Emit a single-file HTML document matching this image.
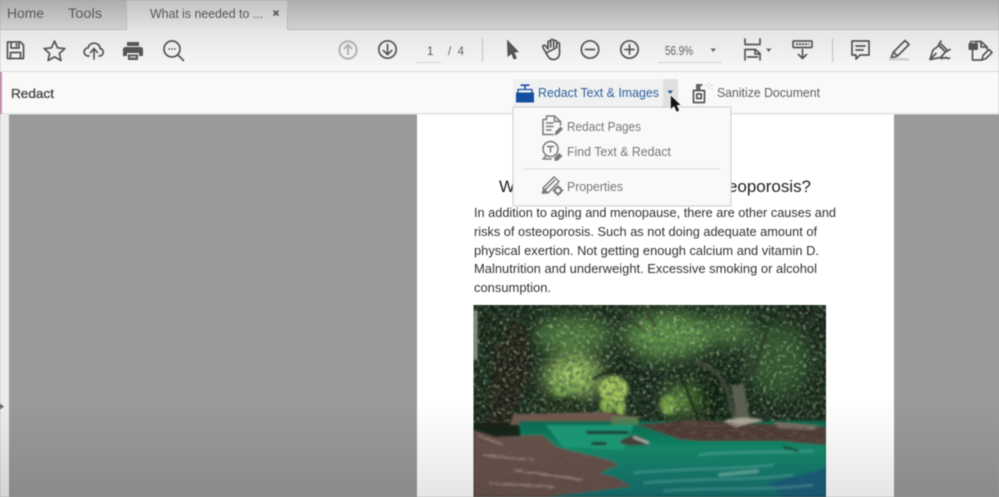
<!DOCTYPE html>
<html lang="en"><head><meta charset="utf-8"><title>Redact</title>
<style>
html,body{margin:0;padding:0;background:#9a9a9a;width:999px;height:497px;overflow:hidden}
svg{display:block;position:absolute;left:0;top:0;filter:blur(.45px)}
text{font-family:"Liberation Sans",Arial,sans-serif}
.i{fill:none;stroke:#555;stroke-width:1.7;stroke-linejoin:round;stroke-linecap:round}
.g{fill:none;stroke:#7a7a7a;stroke-width:1.5;stroke-linejoin:round;stroke-linecap:round}
</style></head><body>
<svg width="999" height="497" viewBox="0 0 999 497" xmlns="http://www.w3.org/2000/svg">
<defs>
<linearGradient id="top" x1="0" y1="0" x2="0" y2="1"><stop offset="0" stop-color="#adadad"/><stop offset="1" stop-color="#d2d2d2"/></linearGradient>
<linearGradient id="tab" x1="0" y1="0" x2="0" y2="1"><stop offset="0" stop-color="#c2c2c2"/><stop offset="1" stop-color="#e4e4e4"/></linearGradient>
<linearGradient id="tb" x1="0" y1="0" x2="0" y2="1"><stop offset="0" stop-color="#e5e5e5"/><stop offset="1" stop-color="#f8f8f8"/></linearGradient>
<linearGradient id="fade" x1="0" y1="0" x2="0" y2="1"><stop offset="0" stop-color="#000" stop-opacity="0"/><stop offset="1" stop-color="#000" stop-opacity=".1"/></linearGradient>
<linearGradient id="water" x1="0" y1="0" x2="0" y2="1"><stop offset="0" stop-color="#0f6a50"/><stop offset=".35" stop-color="#128a6c"/><stop offset="1" stop-color="#14706f"/></linearGradient>
<filter id="b1" x="-20%" y="-20%" width="140%" height="140%"><feGaussianBlur stdDeviation="1.100"/></filter>
<filter id="b2" x="-30%" y="-30%" width="160%" height="160%"><feGaussianBlur stdDeviation="1.800"/></filter>
<filter id="b3" x="-40%" y="-40%" width="180%" height="180%"><feGaussianBlur stdDeviation="3"/></filter>
<filter id="b8" x="-60%" y="-60%" width="220%" height="220%"><feGaussianBlur stdDeviation="8"/></filter>
<filter id="leaf" x="0" y="0" width="100%" height="100%"><feTurbulence type="fractalNoise" baseFrequency=".24" numOctaves="2" seed="8"/><feColorMatrix type="matrix" values="0 0 0 0 .04  0 0 0 0 .09  0 0 0 0 .05  2.600 2.600 0 0 -2.300"/><feGaussianBlur stdDeviation=".6"/></filter>
<filter id="leaf2" x="0" y="0" width="100%" height="100%"><feTurbulence type="fractalNoise" baseFrequency=".3" numOctaves="2" seed="21"/><feColorMatrix type="matrix" values="0 0 0 0 .62  0 0 0 0 .78  0 0 0 0 .42  3.500 3.500 0 0 -3.700"/><feGaussianBlur stdDeviation=".5"/></filter>
<filter id="bark" x="0" y="0" width="100%" height="100%"><feTurbulence type="fractalNoise" baseFrequency=".12 .4" numOctaves="2" seed="5"/><feColorMatrix type="matrix" values="0 0 0 0 .12  0 0 0 0 .08  0 0 0 0 .07  3 3 0 0 -2.800"/><feGaussianBlur stdDeviation=".5"/></filter>
<clipPath id="pic"><rect width="352.500" height="192"/></clipPath>
<clipPath id="bankclip"><path d="M0 125L22 132 68 130 85 143 135 155 145 160 125 168 140 172 158 181 120 186 70 192H0Z"/><path d="M165 120L215 115 270 118 352 122V140L310 136 262 136 225 136 205 134 180 125Z"/></clipPath>
</defs>

<rect x="0" y="0" width="999" height="497" fill="#9a9a9a"/>
<rect x="0" y="114" width="9" height="383" fill="#ececec"/>
<rect x="417" y="114" width="477" height="383" fill="#fff"/>

<!-- tab bar -->
<rect width="999" height="30" fill="url(#top)"/>
<rect x="127" y="0" width="160" height="30" fill="url(#tab)"/>
<path d="M126.500 0V29.500M287.500 0V29.500" stroke="#b6b6b6"/>
<path d="M0 29.500H127M287 29.500H999" stroke="#bcbcbc"/>
<text x="7" y="18" font-size="14" fill="#5a5a5a" textLength="37" lengthAdjust="spacingAndGlyphs">Home</text>
<text x="68" y="18" font-size="14" fill="#5a5a5a" textLength="34" lengthAdjust="spacingAndGlyphs">Tools</text>
<text x="150" y="18" font-size="13" fill="#555" textLength="113" lengthAdjust="spacingAndGlyphs">What is needed to ...</text>
<path d="M273.500 10.500l5 5m0-5l-5 5" stroke="#555" stroke-width="1.600" fill="none"/>

<!-- toolbar -->
<rect y="30" width="999" height="41" fill="url(#tb)"/>
<rect y="71" width="999" height="1" fill="#dcdcdc"/>
<path class="i" d="M7.500 42H20.500L23.500 45V58.500H7.500Z"/><path class="i" d="M11 42V48H19V42M16.500 44V46M10.500 58.500V52.500H20.500V58.500" stroke-width="1.300"/>
<path class="i" d="M54.500 41L57.500 47.800 64.800 48.600 59.400 53.500 60.900 60.500 54.500 56.900 48.100 60.500 49.600 53.500 44.200 48.600 51.500 47.800Z"/>
<path class="i" d="M89 56H87.500C81.500 54 84.500 47.500 88 48 89.500 41 100 42 100 48.500 104.500 49.500 104 55 100 56H99"/><path class="i" d="M94 59V49M90.500 52.500L94 48.500 97.500 52.500"/>
<path d="M127 42H139V46H127ZM125.500 47H140.500A2.500 2.500 0 0 1 143 49.500V56H139V53H127V56H123V49.500A2.500 2.500 0 0 1 125.500 47ZM128 54.500H138V60H128Z" fill="#555"/><rect x="130" y="56" width="6" height="2" fill="#bbb"/>
<circle class="i" cx="172" cy="49" r="8"/><path class="i" d="M178 55L183.500 60.500" stroke-width="2"/><path d="M168.500 49h1.500m1.300 0h1.500m1.300 0h1.500" stroke="#555" stroke-width="1.400" fill="none"/>
<circle cx="348" cy="50" r="8.700" fill="none" stroke="#adadad" stroke-width="1.800"/><path d="M348 55V45M343.800 49L348 44.800 352.200 49" fill="none" stroke="#adadad" stroke-width="1.800"/>
<circle class="i" cx="387.500" cy="49.500" r="8.700"/><path class="i" d="M387.500 44.500V54.500M383.300 50.500L387.500 54.700 391.700 50.500"/>
<text x="427" y="55" font-size="11.500" fill="#555">1</text>
<text x="448" y="55" font-size="11.500" fill="#666" textLength="16">/ 4</text>
<path d="M416 62.500H441" stroke="#d5d5d5"/>
<path d="M482.500 38V62" stroke="#c8c8c8" stroke-width="1.300"/>
<path d="M507 39.500L519 52 514.500 52.500 517 58.500 513.500 59.500 511.500 54 507.500 57Z" fill="#555"/>
<path class="i" d="M546 53L543 47.500C542 45.500 544.500 44.500 545.800 46L548 49V42.500C548 40.500 550.500 40.500 550.700 42.500V47M550.700 47V41C550.700 39 553.700 39 553.700 41V47M553.700 47V41.700C553.700 40 556.500 40 556.700 41.700V47.500M556.700 47.500V44C556.700 42.300 559.500 42.300 559.500 44V53C559.500 57 557 59.500 553 59.500 549.500 59.500 548 56.500 546 53Z" stroke-width="1.500"/>
<circle class="i" cx="590" cy="49.500" r="8.700"/><path class="i" d="M585.500 49.500H594.500"/>
<circle class="i" cx="629.500" cy="49.500" r="8.700"/><path class="i" d="M625 49.500H634M629.500 45V54"/>
<text x="665" y="55" font-size="12.500" fill="#5e5e5e" textLength="28" lengthAdjust="spacingAndGlyphs">56.9%</text>
<path d="M710.500 48.500H716L713.200 52Z" fill="#666"/>
<path d="M658 62.500H722" stroke="#d5d5d5"/>
<path class="i" d="M745 39V44.500H760V39M745 60V49.500H755.500L760 53.500V60" stroke-width="1.500"/><path class="i" d="M755 49.500V54H760M747.500 57H757.500" stroke-width="1.200"/>
<path d="M766 48.500H771.500L768.700 52Z" fill="#666"/>
<rect class="i" x="793" y="41" width="19" height="6.500" rx="1"/><path d="M796 44.200h13" stroke="#555" stroke-width="1.800" stroke-dasharray="2 1" fill="none"/><path class="i" d="M802.500 49.500V58.500M798.500 54.500L802.500 58.500 806.500 54.500"/>
<path d="M832.500 38V62" stroke="#c8c8c8" stroke-width="1.300"/>
<path class="i" d="M852 41H869V55H860L856 59V55H852Z"/><path class="i" d="M856 46H865M856 50H863" stroke-width="1.200"/>
<path class="i" d="M893.500 52L905 40.500 909 44.500 897.500 56ZM893.500 52L891 58 897.500 56"/><rect x="889" y="58" width="20" height="2.500" fill="#cfcfcf"/>
<path class="i" d="M930 59.500L933 50 939 45.500 945.500 52 940.500 57.500ZM930 59.500L936 53.500" stroke-width="1.600"/><path class="i" d="M939 45.500L942 48.500M941 41L938.500 45M945.500 52L950 49.500M941 44L947 50" stroke-width="1.600"/><path class="i" d="M941.500 59C943.500 55.500 944.500 60 946 57.500 946.500 56.500 947.500 60 949.500 58" stroke-width="1.100"/>
<path class="i" d="M976 41.500H981L987 47V49M972.500 50.500V60H982" stroke-width="1.600"/><path class="i" d="M981 41.500V47H987" stroke-width="1.300"/><rect x="968.500" y="43" width="9.500" height="7" rx="1" fill="#555"/><path d="M970.500 43V41.500H976V43" stroke="#555" fill="none" stroke-width="1.300"/><path class="i" d="M982 60L983 55.500 989 49.500 992 52.500 986 58.500Z" stroke-width="1.400"/>

<!-- redact bar -->
<rect y="72" width="999" height="41" fill="#f9f9f9"/>
<rect y="113" width="999" height="1.500" fill="#e2e2e2"/>
<rect x="0" y="72" width="2" height="42" fill="#cc8fb5"/>
<text x="11" y="98" font-size="13" fill="#484848" stroke="#484848" stroke-width=".35" textLength="43" lengthAdjust="spacingAndGlyphs">Redact</text>
<rect x="513" y="79" width="150" height="28" fill="#f1f1f1"/>
<rect x="663" y="79" width="15" height="28" fill="#e0e0e0"/>
<path d="M516 92.500H534V102.500H516Z" fill="#14509f"/>
<path d="M518 92.500V89.500H532V92.500" fill="none" stroke="#14509f" stroke-width="1.300"/>
<path d="M520.500 85.200H529.500M525 85.200V89.500" stroke="#14509f" stroke-width="1.600" fill="none"/>
<text x="538" y="97" font-size="12.500" fill="#2e619f" textLength="121" lengthAdjust="spacingAndGlyphs">Redact Text &amp; Images</text>
<path d="M667.500 90.500H673L670.200 94Z" fill="#2458a0"/>
<path class="i" d="M693.500 90.500H704.500V102.500H693.500Z" stroke-width="1.500"/><path d="M696 90V84H702.500V86H700.500V90Z" fill="#666"/><rect class="i" x="696.800" y="94" width="4.500" height="4.500" stroke-width="1.200"/>
<path d="M706 85v.7M709 83.500v.7M712 85v.7M709 87.500v.7M712 89v.7" stroke="#999" stroke-width="1.200" fill="none"/>
<text x="717" y="97" font-size="12.500" fill="#606060" textLength="103" lengthAdjust="spacingAndGlyphs">Sanitize Document</text>

<!-- document text -->
<text x="499" y="192" font-size="17" fill="#222">W</text>
<text x="728" y="192" font-size="17" fill="#222" textLength="83" lengthAdjust="spacingAndGlyphs">eoporosis?</text>
<g font-size="13" fill="#333">
<text x="474" y="217" textLength="362" lengthAdjust="spacingAndGlyphs">In addition to aging and menopause, there are other causes and</text>
<text x="474" y="236" textLength="343" lengthAdjust="spacingAndGlyphs">risks of osteoporosis. Such as not doing adequate amount of</text>
<text x="474" y="255" textLength="345" lengthAdjust="spacingAndGlyphs">physical exertion. Not getting enough calcium and vitamin D.</text>
<text x="474" y="273" textLength="343" lengthAdjust="spacingAndGlyphs">Malnutrition and underweight. Excessive smoking or alcohol</text>
<text x="474" y="292" textLength="77" lengthAdjust="spacingAndGlyphs">consumption.</text>
</g>

<!-- photo -->
<g transform="translate(473.500 305)" clip-path="url(#pic)">
<rect width="353" height="192" fill="#18261a"/>
<g filter="url(#b8)">
<ellipse cx="100" cy="72" rx="30" ry="22" fill="#8db25a"/>
<ellipse cx="100" cy="30" rx="38" ry="18" fill="#4f7a3d"/>
<ellipse cx="195" cy="30" rx="45" ry="22" fill="#5d8f47"/>
<ellipse cx="255" cy="25" rx="25" ry="16" fill="#48733c"/>
<ellipse cx="305" cy="55" rx="30" ry="35" fill="#33552d"/>
<ellipse cx="210" cy="95" rx="16" ry="14" fill="#5f903c"/>
<ellipse cx="335" cy="12" rx="24" ry="14" fill="#141d14"/>
<ellipse cx="240" cy="90" rx="22" ry="22" fill="#101a10"/>
<ellipse cx="178" cy="72" rx="16" ry="20" fill="#16241a"/>
</g>
<g filter="url(#b3)">
<path d="M22 25C18 60 22 85 8 120L40 120C45 90 60 75 58 50 56 30 50 22 45 15Z" fill="#201f19"/>
<ellipse cx="15" cy="20" rx="20" ry="22" fill="#132016"/>
<ellipse cx="90" cy="102" rx="22" ry="10" fill="#1c2a18"/>
</g>
<g filter="url(#b2)">
<ellipse cx="140" cy="84" rx="15" ry="13" fill="#a2c45a"/>
<ellipse cx="134" cy="100" rx="8" ry="9" fill="#8cb34c"/>
<ellipse cx="147" cy="102" rx="5" ry="10" fill="#9cbe52"/>
<ellipse cx="100" cy="70" rx="14" ry="10" fill="#93b85a"/>
<ellipse cx="88" cy="85" rx="8" ry="7" fill="#6f9a47"/>
<ellipse cx="195" cy="100" rx="9" ry="10" fill="#7ba446"/>
</g>
<rect width="353" height="118" filter="url(#leaf2)" opacity=".5"/>
<rect width="353" height="118" filter="url(#leaf)" opacity=".55"/>
<g filter="url(#b1)">
<path d="M0 5H4V55H0Z" fill="#8b9488"/>
<path d="M119 75C128 66 150 62 172 70" fill="none" stroke="#182218" stroke-width="2"/>
<path d="M145 2C152 12 160 18 170 25M170 2L182 22" fill="none" stroke="#3b3d2b" stroke-width="2"/>
<path d="M222 58C245 62 254 78 260 112" fill="none" stroke="#3f463a" stroke-width="4"/>
<path d="M258 82C260 95 262 105 262 114L276 114C274 100 272 90 270 78Z" fill="#5b6050"/>
<path d="M272 78C280 68 284 55 292 30" fill="none" stroke="#2f3a2a" stroke-width="3"/>
<path d="M205 65L224 112" stroke="#1a2718" stroke-width="2.500"/>
<path d="M40 109L130 107 165 112 165 120H36Z" fill="#6f5a4f"/>
<path d="M45 116H353V192H55Z" fill="url(#water)"/>
<path d="M72 120H160L150 145 90 142Z" fill="#1fa27e" opacity=".8"/>
<path d="M138 112H165V120H138Z" fill="#5e8a55" opacity=".7"/>
<path d="M295 178C315 172 340 168 353 162V192H310Z" fill="#1a5f7c"/>
<path d="M160 168C205 163 255 165 300 160M170 178C220 173 270 176 320 170M190 186C240 182 290 186 340 180M225 150C255 146 300 148 340 146" fill="none" stroke="#7fc5bd" stroke-width="2.200" opacity=".4"/>
<path d="M245 170L285 166" stroke="#b2dcd4" stroke-width="3.500" opacity=".45"/>
<path d="M0 125L22 132 68 130 85 143 135 155 145 160 125 168 140 172 158 181 120 186 70 192H0Z" fill="#6a544d"/>
<path d="M165 120L215 115 270 118 352 122V140L310 136 262 136 225 136 205 134 180 125Z" fill="#4f3c34"/>
<path d="M250 116C262 112 280 112 290 115L262 122Z" fill="#a9a795"/>
<path d="M300 117L345 121 340 125 305 123Z" fill="#7f7566"/>
<path d="M5 130L30 140M10 150L60 155M40 165L110 175M15 178L80 182" stroke="#a28d80" stroke-width="2" fill="none"/>
<path d="M146 138C148 132 160 130 168 132L176 139C165 141 155 141 146 138Z" fill="#46433b"/>
<path d="M160 132L175 138" stroke="#c9cfc6" stroke-width="1.800"/>
<path d="M113 126H155V129H113Z" fill="#1c241c"/>
<path d="M118 137H133V140H118Z" fill="#1a2a22"/>
<path d="M310 142L325 146" stroke="#182a22" stroke-width="2"/>
</g>
<rect width="353" height="192" clip-path="url(#bankclip)" filter="url(#bark)" opacity=".7"/>
</g>

<path d="M0 403.500L4 406.500 0 409.500Z" fill="#666"/>
<rect y="400" width="999" height="97" fill="url(#fade)"/>

<!-- dropdown -->
<rect x="513" y="107" width="218" height="99" fill="#f9f9f9" stroke="#cdcdcd"/>
<path d="M523 169H720" stroke="#dcdcdc"/>
<g>
<path class="g" d="M546.500 119V116H554.500L560.500 121.500V125"/><path class="g" d="M554.500 116V121.500H560.500" stroke-width="1.200"/>
<path class="g" d="M543 119.500H546.500M543 119.500V134.500H553"/>
<path class="g" d="M546.500 123H553M546.500 126.500H553M546.500 130H551" stroke-width="1.200"/>
<path d="M554.500 135.500L555.500 131.500 560.500 126.500 563 129 558 134Z" fill="#7a7a7a"/>
<circle class="g" cx="550.500" cy="149" r="7.500" stroke-width="1.700"/><path class="g" d="M547.500 146.500H553.500M550.500 146.500V152" stroke-width="1.400"/>
<path class="g" d="M546 156L543 159H551" stroke-width="1.700"/>
<path d="M554 158L559 153 562.500 156 558 160.500 555 161Z" fill="#7a7a7a"/>
<path class="g" d="M543 188L554 177 559 181.500 548 193Z" stroke-width="1.700"/>
<path d="M541.500 194L543 188.500 548 193.500Z" fill="#7a7a7a"/>
<path d="M545 190L555 180" stroke="#7a7a7a" stroke-width="1.500" fill="none"/>
<circle cx="558" cy="190.500" r="3.200" fill="none" stroke="#7a7a7a" stroke-width="2.200"/>
<path d="M558 185v1.500M558 194.500v1.500M552.500 190.500h1.500M562 190.500h1.500" stroke="#7a7a7a" stroke-width="1.600"/>
</g>
<g font-size="12.500" fill="#777">
<text x="567" y="131" textLength="74" lengthAdjust="spacingAndGlyphs">Redact Pages</text>
<text x="567" y="156" textLength="104" lengthAdjust="spacingAndGlyphs">Find Text &amp; Redact</text>
<text x="567" y="191" textLength="56" lengthAdjust="spacingAndGlyphs">Properties</text>
</g>

<path d="M670.500 95L670.500 109.500 674 106.500 676.500 112 679.500 110.500 677 105.500 681 105Z" fill="#111" stroke="#eee" stroke-width=".6"/>
</svg>
</body></html>
